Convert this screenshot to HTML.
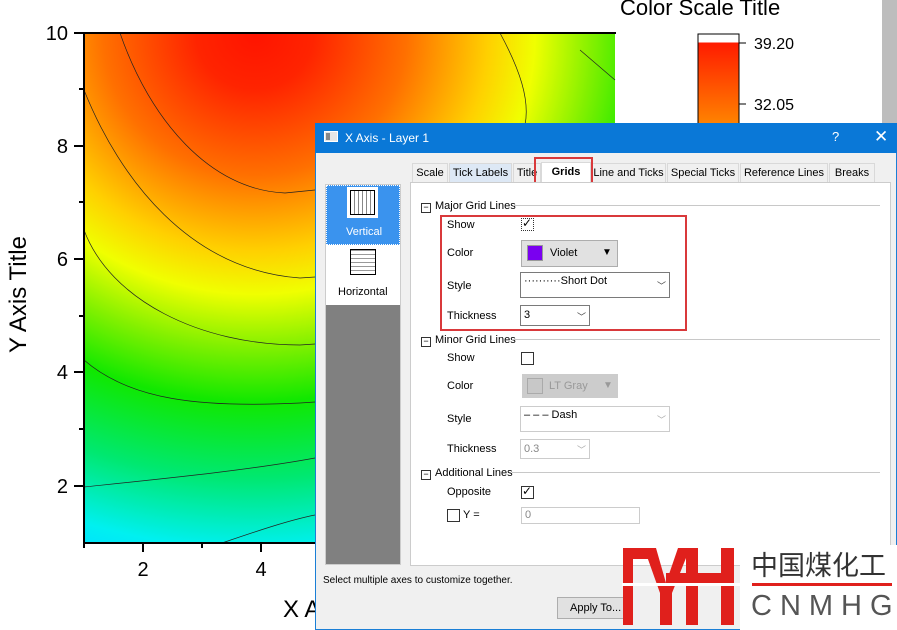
<!DOCTYPE html>
<html><head><meta charset="utf-8"><style>
*{margin:0;padding:0;box-sizing:border-box}
body{width:897px;height:630px;overflow:hidden;background:#fff;position:relative;font-family:"Liberation Sans",sans-serif}
.a{position:absolute}
.t{position:absolute;font-size:11px;color:#000;white-space:nowrap}
.tab{position:absolute;top:163px;height:19px;font-size:11px;padding:3px 0 0 0;text-align:center;border:1px solid #d9d9d9;border-bottom:none;background:#f0f0f0}
.cb{position:absolute;width:13px;height:13px;border:1px solid #333;background:#fff}
.dd{position:absolute;border:1px solid #7a7a7a;background:#fff;font-size:11px}
.hdr{position:absolute;left:421px;font-size:11px;white-space:nowrap}
.hdr b{display:inline-block;width:10px;height:10px;border:1px solid #333;font-weight:normal;font-size:9px;line-height:7px;text-align:center;margin-right:4px;vertical-align:-1px}
.line{position:absolute;height:1px;background:#c8c8c8}
</style></head><body>
<svg class="a" style="left:0;top:0" width="897" height="630">
<defs>
<radialGradient id="g" gradientUnits="userSpaceOnUse" cx="255" cy="35" r="540" gradientTransform="translate(255 35) scale(1.08 1) translate(-255 -35)">
<stop offset="0" stop-color="#ff1400"/>
<stop offset="0.1" stop-color="#ff2400"/>
<stop offset="0.26" stop-color="#ff7000"/>
<stop offset="0.4" stop-color="#ffd000"/>
<stop offset="0.48" stop-color="#f0ff00"/>
<stop offset="0.58" stop-color="#80f000"/>
<stop offset="0.68" stop-color="#10e800"/>
<stop offset="0.82" stop-color="#00e870"/>
<stop offset="0.95" stop-color="#00f0f0"/>
<stop offset="1" stop-color="#00e0ff"/>
</radialGradient>
<linearGradient id="cs" x1="0" y1="0" x2="0" y2="1"><stop offset="0" stop-color="#ff1000"/><stop offset="1" stop-color="#ff8a00"/></linearGradient>
</defs>
<rect x="84" y="33" width="531" height="510" fill="url(#g)"/>
<path d="M520 543 Q590 515 615 505 L615 543Z" fill="#00c8f0" opacity="0.7"/>
<g fill="none" stroke="#222" stroke-width="0.7">
<path d="M120 33 C150 120 210 190 285 193 L315 190"/>
<path d="M84 90 C120 180 190 270 300 278 L315 277"/>
<path d="M84 230 C110 300 200 345 300 345 L315 344"/>
<path d="M84 360 C130 400 200 408 300 403 L315 402"/>
<path d="M84 487 C170 478 250 470 315 458"/>
<path d="M222 543 C260 530 290 520 315 515"/>
<path d="M500 33 C520 70 530 100 525 125"/>
<path d="M580 50 L615 80"/>
</g>
<g stroke="#000" stroke-width="2"><line x1="83" y1="33" x2="616" y2="33"/><line x1="84" y1="32" x2="84" y2="544"/><line x1="83" y1="543" x2="316" y2="543"/>
<line x1="74" y1="33" x2="84" y2="33"/><line x1="74" y1="146" x2="84" y2="146"/><line x1="74" y1="259" x2="84" y2="259"/><line x1="74" y1="372" x2="84" y2="372"/><line x1="74" y1="486" x2="84" y2="486"/>
<line x1="79" y1="89" x2="84" y2="89"/><line x1="79" y1="202" x2="84" y2="202"/><line x1="79" y1="316" x2="84" y2="316"/><line x1="79" y1="429" x2="84" y2="429"/>
<line x1="143" y1="543" x2="143" y2="552"/><line x1="261" y1="543" x2="261" y2="552"/><line x1="202" y1="543" x2="202" y2="548"/><line x1="84" y1="543" x2="84" y2="548"/></g>
<g font-family="Liberation Sans" font-size="20" fill="#000" text-anchor="end">
<text x="68" y="40">10</text><text x="68" y="153">8</text><text x="68" y="266">6</text><text x="68" y="379">4</text><text x="68" y="493">2</text></g>
<g font-family="Liberation Sans" font-size="20" fill="#000" text-anchor="middle"><text x="143" y="576">2</text><text x="261" y="576">4</text></g>
<text x="283" y="617" font-family="Liberation Sans" font-size="24">X A</text>
<text transform="translate(26 353) rotate(-90)" font-family="Liberation Sans" font-size="24">Y Axis Title</text>
<text x="620" y="15" font-family="Liberation Sans" font-size="22">Color Scale Title</text>
<rect x="698" y="34" width="41" height="95" fill="url(#cs)" stroke="#000" stroke-width="1"/>
<rect x="698.5" y="34.5" width="40" height="8" fill="#fff"/>
<line x1="739" y1="43" x2="746" y2="43" stroke="#000"/><line x1="739" y1="104" x2="746" y2="104" stroke="#000"/>
<text x="754" y="49" font-family="Liberation Sans" font-size="16">39.20</text>
<text x="754" y="110" font-family="Liberation Sans" font-size="16">32.05</text>
<rect x="882" y="0" width="15" height="123" fill="#bdbdbd"/>
</svg>

<!-- dialog -->
<div class="a" style="left:315px;top:123px;width:582px;height:507px;background:#f0f0f0;border:1px solid #1a7fd6"></div>
<div class="a" style="left:315px;top:123px;width:582px;height:30px;background:#0a78d7"></div>
<div class="a" style="left:324px;top:131px;width:14px;height:11px;background:#e6e6e6;border:1px solid #fff"><div class="a" style="left:1px;top:1px;width:4px;height:7px;background:#888"></div></div>
<div class="t" style="left:345px;top:131px;color:#fff;font-size:12px">X Axis - Layer 1</div>
<div class="t" style="left:832px;top:129px;color:#fff;font-size:13px">?</div>
<div class="t" style="left:874px;top:127px;color:#fff;font-size:17px">✕</div>

<div class="a" style="left:325px;top:184px;width:76px;height:381px;background:#808080;border:1px solid #ccc"></div>
<div class="a" style="left:326px;top:185px;width:74px;height:60px;background:#3a93ee;border:1px dotted #fff"></div>
<div class="a" style="left:347px;top:187px;width:31px;height:31px;background:#fff"><div class="a" style="left:3px;top:3px;width:25px;height:25px;border:1px solid #000;background:repeating-linear-gradient(90deg,#fff 0 3px,#888 3px 4px)"></div></div>
<div class="t" style="left:346px;top:226px;color:#fff">Vertical</div>
<div class="a" style="left:326px;top:245px;width:74px;height:60px;background:#fff"></div>
<div class="a" style="left:350px;top:249px;width:26px;height:26px;border:1px solid #000;background:repeating-linear-gradient(0deg,#fff 0 3px,#999 3px 4px)"></div>
<div class="t" style="left:338px;top:286px">Horizontal</div>

<div class="tab" style="left:412px;width:36px">Scale</div>
<div class="tab" style="left:449px;width:63px;background:#dde8f5">Tick Labels</div>
<div class="tab" style="left:513px;width:28px">Title</div>
<div class="tab" style="left:541px;width:50px;background:#fff;font-weight:bold;height:21px;top:162px">Grids</div>
<div class="tab" style="left:591px;width:75px">Line and Ticks</div>
<div class="tab" style="left:667px;width:72px">Special Ticks</div>
<div class="tab" style="left:740px;width:88px">Reference Lines</div>
<div class="tab" style="left:829px;width:46px">Breaks</div>
<div class="a" style="left:534px;top:157px;width:59px;height:28px;border:2px solid #d9393b"></div>

<div class="a" style="left:410px;top:182px;width:481px;height:384px;background:#fff;border:1px solid #ccc"></div>

<div class="hdr" style="top:200px"><b>−</b>Major Grid Lines</div><div class="line" style="left:513px;top:205px;width:367px"></div>
<div class="t" style="left:447px;top:219px">Show</div>
<div class="cb" style="left:521px;top:218px;border-style:dotted"><div class="t" style="left:0;top:-3px;font-size:12px">✓</div></div>
<div class="t" style="left:447px;top:247px">Color</div>
<div class="dd" style="left:521px;top:240px;width:97px;height:27px;background:#e1e1e1;border-color:#adadad"><div class="a" style="left:5px;top:4px;width:16px;height:16px;background:#7a00f0;border:1px solid #999"></div><div class="t" style="left:28px;top:6px">Violet</div><div class="t" style="left:80px;top:6px;font-size:10px">▼</div></div>
<div class="t" style="left:447px;top:280px">Style</div>
<div class="dd" style="left:520px;top:272px;width:150px;height:26px"><div class="t" style="left:3px;top:2px">··········Short Dot</div><div class="t" style="left:136px;top:6px;font-size:9px;color:#444">﹀</div></div>
<div class="t" style="left:447px;top:310px">Thickness</div>
<div class="dd" style="left:520px;top:305px;width:70px;height:21px"><div class="t" style="left:3px;top:3px">3</div><div class="t" style="left:56px;top:4px;font-size:9px;color:#444">﹀</div></div>
<div class="a" style="left:440px;top:215px;width:247px;height:116px;border:2px solid #d9393b"></div>

<div class="hdr" style="top:334px"><b>−</b>Minor Grid Lines</div><div class="line" style="left:512px;top:339px;width:368px"></div>
<div class="t" style="left:447px;top:352px">Show</div>
<div class="cb" style="left:521px;top:352px"></div>
<div class="t" style="left:447px;top:380px">Color</div>
<div class="dd" style="left:522px;top:374px;width:96px;height:24px;background:#ccc;border-color:#ccc"><div class="a" style="left:4px;top:3px;width:16px;height:16px;background:#c8c8c8;border:1px solid #aaa"></div><div class="t" style="left:26px;top:5px;color:#999">LT Gray</div><div class="t" style="left:80px;top:5px;font-size:10px;color:#999">▼</div></div>
<div class="t" style="left:447px;top:413px">Style</div>
<div class="dd" style="left:520px;top:406px;width:150px;height:26px;border-color:#ccc"><div class="t" style="left:3px;top:2px">– – – Dash</div><div class="t" style="left:136px;top:6px;font-size:9px;color:#aaa">﹀</div></div>
<div class="t" style="left:447px;top:443px">Thickness</div>
<div class="dd" style="left:520px;top:439px;width:70px;height:20px;border-color:#ccc"><div class="t" style="left:3px;top:3px;color:#888">0.3</div><div class="t" style="left:56px;top:3px;font-size:9px;color:#aaa">﹀</div></div>

<div class="hdr" style="top:467px"><b>−</b>Additional Lines</div><div class="line" style="left:512px;top:472px;width:368px"></div>
<div class="t" style="left:447px;top:486px">Opposite</div>
<div class="cb" style="left:521px;top:486px"><div class="t" style="left:0;top:-3px;font-size:12px">✓</div></div>
<div class="cb" style="left:447px;top:509px"></div><div class="t" style="left:463px;top:509px">Y =</div>
<div class="dd" style="left:521px;top:507px;width:119px;height:17px;border-color:#ccc"><div class="t" style="left:3px;top:1px;color:#888">0</div></div>

<div class="t" style="left:323px;top:575px;font-size:10px">Select multiple axes to customize together.</div>
<div class="a" style="left:557px;top:597px;width:70px;height:22px;background:#e1e1e1;border:1px solid #adadad"><div class="t" style="left:12px;top:4px">Apply To...</div></div>

<!-- logo -->
<div class="a" style="left:740px;top:545px;width:157px;height:85px;background:#fff"></div>
<svg class="a" style="left:622px;top:545px" width="120" height="85">
<g fill="#e0201c">
<rect x="1" y="3" width="10" height="77"/>
<rect x="1" y="3" width="26" height="11"/>
<path d="M22 3 H34 L44 38 L56 3 H68 L50 48 H38Z"/>
<rect x="38" y="40" width="12" height="40"/>
<rect x="64" y="3" width="12" height="77"/>
<rect x="99" y="3" width="13" height="77"/>
<rect x="44" y="28" width="68" height="11"/>
</g>
<rect x="0" y="38" width="120" height="3" fill="#fff"/>
</svg>
<div class="a" style="left:752px;top:583px;width:140px;height:3px;background:#e0201c"></div>
<div class="t" style="left:751px;top:548px;font-size:27px;line-height:32px;color:#333;font-family:'Noto Sans CJK SC',sans-serif">中国煤化工</div>
<div class="t" style="left:751px;top:590px;font-size:29px;color:#555;letter-spacing:8px">CNMHG</div>
</body></html>
